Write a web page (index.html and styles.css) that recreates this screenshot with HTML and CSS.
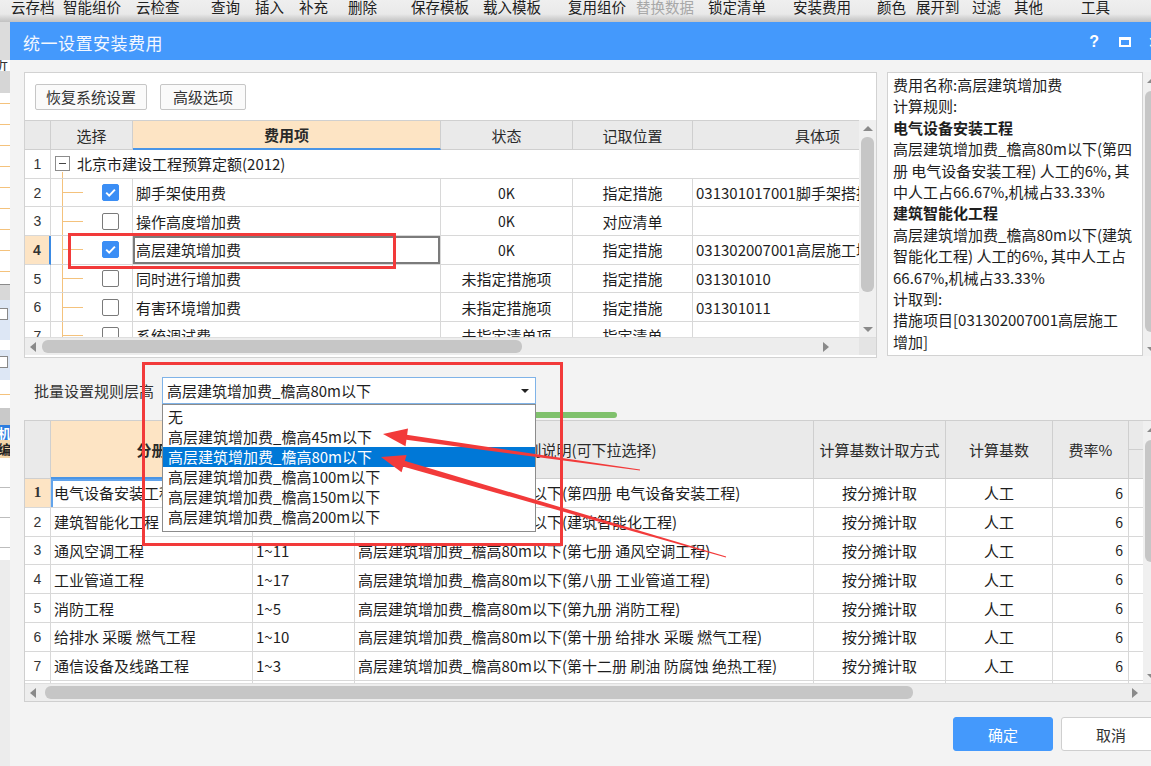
FILE: index.html
```html
<!DOCTYPE html>
<html lang="zh-CN">
<head>
<meta charset="utf-8">
<title>统一设置安装费用</title>
<link rel="stylesheet" href="styles.css">
</head>
<body>
<div class="appbar">
  <span>云存档</span><span>智能组价</span><span>云检查</span><span>查询</span><span>插入</span><span>补充</span><span>删除</span><span>保存模板</span><span>载入模板</span><span>复用组价</span><span class="dis">替换数据</span><span>锁定清单</span><span>安装费用</span><span>颜色</span><span>展开到</span><span>过滤</span><span>其他</span><span>工具</span>
</div>
<div class="main">
  <div class="strip">
    <div class="s1"></div>
    <div class="s2"><span>析</span></div>
    <div class="s3"></div>
    <div class="s4"></div>
    <div class="s5"></div>
    <div class="s6"></div>
    <div class="s7"><span class="sbox"></span></div>
    <div class="s8"></div>
    <div class="s9"><span class="sbox"></span></div>
    <div class="s10"></div>
    <div class="s11"></div>
    <div class="s12">机</div>
    <div class="s13">编</div>
    <div class="s14"></div>
    <div class="s15"></div>
  </div>
  <div class="dialog">
    <div class="titlebar">
      <span class="title">统一设置安装费用</span>
      <span class="ticons"><span class="q">?</span><span class="maxi"></span><span class="close">×</span></span>
    </div>
    <div class="dbody">
      <div class="toprow">
        <div class="leftbox">
          <div class="btnrow"><button class="btn b1">恢复系统设置</button><button class="btn b2">高级选项</button></div>
          <div class="tbl">
            <div class="tgrid">
              <div class="c h"></div>
              <div class="c h">选择</div>
              <div class="c h hot">费用项</div>
              <div class="c h">状态</div>
              <div class="c h">记取位置</div>
              <div class="c h">具体项</div>

              <div class="c rn">1</div>
              <div class="c grp"><span class="minus"></span>北京市建设工程预算定额(2012)</div>

              <div class="c rn">2</div>
              <div class="c sel"><span class="cb on"><svg viewBox="0 0 17 17" width="17" height="17"><path d="M4.2 8.6l3 3L12.9 5.6" fill="none" stroke="#fff" stroke-width="2"/></svg></span></div>
              <div class="c name">脚手架使用费</div>
              <div class="c ctr ok">0K</div>
              <div class="c ctr">指定措施</div>
              <div class="c lft">031301017001脚手架搭拆费</div>

              <div class="c rn">3</div>
              <div class="c sel"><span class="cb"></span></div>
              <div class="c name">操作高度增加费</div>
              <div class="c ctr ok">0K</div>
              <div class="c ctr">对应清单</div>
              <div class="c lft"></div>

              <div class="c rn cur">4</div>
              <div class="c sel"><span class="cb on"><svg viewBox="0 0 17 17" width="17" height="17"><path d="M4.2 8.6l3 3L12.9 5.6" fill="none" stroke="#fff" stroke-width="2"/></svg></span></div>
              <div class="c name focus">高层建筑增加费</div>
              <div class="c ctr ok">0K</div>
              <div class="c ctr">指定措施</div>
              <div class="c lft">031302007001高层施工增加</div>

              <div class="c rn">5</div>
              <div class="c sel"><span class="cb"></span></div>
              <div class="c name">同时进行增加费</div>
              <div class="c ctr">未指定措施项</div>
              <div class="c ctr">指定措施</div>
              <div class="c lft">031301010</div>

              <div class="c rn">6</div>
              <div class="c sel"><span class="cb"></span></div>
              <div class="c name">有害环境增加费</div>
              <div class="c ctr">未指定措施项</div>
              <div class="c ctr">指定措施</div>
              <div class="c lft">031301011</div>

              <div class="c rn">7</div>
              <div class="c sel"><span class="cb"></span></div>
              <div class="c name">系统调试费</div>
              <div class="c ctr">未指定清单项</div>
              <div class="c ctr">指定清单</div>
              <div class="c lft"></div>
            </div>
            <div class="vscroll"><span class="tri up"></span><span class="vthumb"></span><span class="tri down"></span></div>
          </div>
          <div class="hscroll"><span class="tri left"></span><span class="hthumb"></span><span class="tri right"></span><span class="corner"></span></div>
        </div>
        <div class="infobox">
          <div>费用名称:高层建筑增加费</div>
          <div>计算规则:</div>
          <div class="b">电气设备安装工程</div>
          <div>高层建筑增加费_檐高80m以下(第四</div>
          <div>册 电气设备安装工程) 人工的6%, 其</div>
          <div>中人工占66.67%,机械占33.33%</div>
          <div class="b">建筑智能化工程</div>
          <div>高层建筑增加费_檐高80m以下(建筑</div>
          <div>智能化工程) 人工的6%, 其中人工占</div>
          <div>66.67%,机械占33.33%</div>
          <div>计取到:</div>
          <div>措施项目[031302007001高层施工</div>
          <div>增加]</div>
        </div>
        <div class="infoscroll"><span class="tri up"></span><span class="ithumb"></span><span class="tri down"></span></div>
      </div>

      <div class="batchrow">
        <span class="blabel">批量设置规则层高</span>
        <div class="combo">
          <span class="ctext">高层建筑增加费_檐高80m以下</span>
          <span class="carrow"></span>
          <div class="ddlist">
            <div class="opt">无</div>
            <div class="opt">高层建筑增加费_檐高45m以下</div>
            <div class="opt act">高层建筑增加费_檐高80m以下</div>
            <div class="opt">高层建筑增加费_檐高100m以下</div>
            <div class="opt">高层建筑增加费_檐高150m以下</div>
            <div class="opt">高层建筑增加费_檐高200m以下</div>
          </div>
        </div>
      </div>
      <div class="greenrow"><span class="gbar"></span></div>

      <div class="bottombox">
        <div class="btbl">
          <div class="bgrid">
            <div class="c h"></div>
            <div class="c h hot">分册</div>
            <div class="c h">章节范围</div>
            <div class="c h">规则说明(可下拉选择)</div>
            <div class="c h">计算基数计取方式</div>
            <div class="c h">计算基数</div>
            <div class="c h">费率%</div>
            <div class="c h split"></div>

            <div class="c rn cur2">1</div>
            <div class="c lft bsel">电气设备安装工程</div>
            <div class="c lft">1~14</div>
            <div class="c lft">高层建筑增加费_檐高80m以下(第四册 电气设备安装工程)</div>
            <div class="c ctr">按分摊计取</div>
            <div class="c ctr">人工</div>
            <div class="c rt">6</div>
            <div class="c"></div>

            <div class="c rn">2</div>
            <div class="c lft">建筑智能化工程</div>
            <div class="c lft">1~9</div>
            <div class="c lft">高层建筑增加费_檐高80m以下(建筑智能化工程)</div>
            <div class="c ctr">按分摊计取</div>
            <div class="c ctr">人工</div>
            <div class="c rt">6</div>
            <div class="c"></div>

            <div class="c rn">3</div>
            <div class="c lft">通风空调工程</div>
            <div class="c lft">1~11</div>
            <div class="c lft">高层建筑增加费_檐高80m以下(第七册 通风空调工程)</div>
            <div class="c ctr">按分摊计取</div>
            <div class="c ctr">人工</div>
            <div class="c rt">6</div>
            <div class="c"></div>

            <div class="c rn">4</div>
            <div class="c lft">工业管道工程</div>
            <div class="c lft">1~17</div>
            <div class="c lft">高层建筑增加费_檐高80m以下(第八册 工业管道工程)</div>
            <div class="c ctr">按分摊计取</div>
            <div class="c ctr">人工</div>
            <div class="c rt">6</div>
            <div class="c"></div>

            <div class="c rn">5</div>
            <div class="c lft">消防工程</div>
            <div class="c lft">1~5</div>
            <div class="c lft">高层建筑增加费_檐高80m以下(第九册 消防工程)</div>
            <div class="c ctr">按分摊计取</div>
            <div class="c ctr">人工</div>
            <div class="c rt">6</div>
            <div class="c"></div>

            <div class="c rn">6</div>
            <div class="c lft">给排水 采暖 燃气工程</div>
            <div class="c lft">1~10</div>
            <div class="c lft">高层建筑增加费_檐高80m以下(第十册 给排水 采暖 燃气工程)</div>
            <div class="c ctr">按分摊计取</div>
            <div class="c ctr">人工</div>
            <div class="c rt">6</div>
            <div class="c"></div>

            <div class="c rn">7</div>
            <div class="c lft">通信设备及线路工程</div>
            <div class="c lft">1~3</div>
            <div class="c lft">高层建筑增加费_檐高80m以下(第十二册 刷油 防腐蚀 绝热工程)</div>
            <div class="c ctr">按分摊计取</div>
            <div class="c ctr">人工</div>
            <div class="c rt">6</div>
            <div class="c"></div>

            <div class="c rn"></div><div class="c"></div><div class="c"></div><div class="c"></div><div class="c"></div><div class="c"></div><div class="c"></div><div class="c"></div>
          </div>
          <div class="bvscroll"><span class="tri up"></span><span class="bvthumb"></span><span class="tri down"></span></div>
        </div>
        <div class="hscroll bh"><span class="tri left"></span><span class="hthumb bthumb"></span><span class="tri right"></span></div>
      </div>

      <div class="footer">
        <button class="fbtn ok2">确定</button>
        <button class="fbtn cancel">取消</button>
      </div>
    </div>
  </div>
</div>

<div class="annot">
  <div class="redbox r1"></div>
  <div class="redbox r2"></div>
  <svg class="arrows" width="1151" height="766" viewBox="0 0 1151 766">
    <polygon points="403.15,434.3 640.07,469.5 639.93,470.5 402.45,439.3" fill="#f23a3a"/>
    <polygon points="383,434 405.5,446.2 408,428.4" fill="#f23a3a"/>
    <polygon points="401.04,459.72 726.14,556.52 725.86,557.48 399.37,465.48" fill="#f23a3a"/>
    <polygon points="381,457 401.55,472.32 406.56,455.04" fill="#f23a3a"/>
  </svg>
</div>
</body>
</html>
```

FILE: styles.css
```css
* { box-sizing: border-box; margin: 0; padding: 0; }
html, body { width: 1151px; height: 766px; overflow: hidden; }
body {
  font-family: "Noto Sans CJK SC", "Noto Sans", sans-serif;
  font-size: 15px;
  color: #1e1e1e;
  background: #f0f0f0;
  display: flex;
  flex-direction: column;
  position: relative;
}

/* background app toolbar */
.appbar {
  height: 22px;
  flex: none;
  display: flex;
  align-items: flex-start;
  white-space: nowrap;
  font-size: 14.5px;
  line-height: 15px;
  color: #202020;
  background: linear-gradient(#efefef 0, #e9e9e9 14px, #d4d4d4 18px, #c2c2c2 22px);
}
.appbar span { flex: none; margin-top: -1px; }
.appbar span.dis { color: #a8a8a8; }
.appbar span:nth-child(1) { margin-left: 11px; }
.appbar span:nth-child(2) { margin-left: 8.5px; }
.appbar span:nth-child(3) { margin-left: 15px; }
.appbar span:nth-child(4) { margin-left: 31.5px; }
.appbar span:nth-child(5) { margin-left: 15px; }
.appbar span:nth-child(6) { margin-left: 15px; }
.appbar span:nth-child(7) { margin-left: 20px; }
.appbar span:nth-child(8) { margin-left: 34px; }
.appbar span:nth-child(9) { margin-left: 14px; }
.appbar span:nth-child(10) { margin-left: 27px; }
.appbar span:nth-child(11) { margin-left: 10px; }
.appbar span:nth-child(12) { margin-left: 14px; }
.appbar span:nth-child(13) { margin-left: 27px; }
.appbar span:nth-child(14) { margin-left: 26px; }
.appbar span:nth-child(15) { margin-left: 10px; }
.appbar span:nth-child(16) { margin-left: 12.5px; }
.appbar span:nth-child(17) { margin-left: 13px; }
.appbar span:nth-child(18) { margin-left: 38px; }

.main { display: flex; flex: 1; min-height: 0; }

/* left strip of the app behind the dialog */
.strip { width: 10px; flex: none; display: flex; flex-direction: column; overflow: hidden; background: #ececec; }
.strip > div { flex: none; }
.s1 { height: 38px; background: #dcdcdc; }
.s2 { height: 11px; background: #fff; font-size: 15px; line-height: 11px; overflow: hidden; }
.s2 span { display: block; margin-left: -7px; margin-top: -3px; color: #333; }
.s3 { height: 22px; background: #d6d6d6; }
.s4 { height: 190px; background: #fff repeating-linear-gradient(to bottom, transparent 0 10px, #f4c27c 10px 11px, transparent 11px 21px); }
.s5 { height: 4px; background: linear-gradient(#fff 0 1px, #8a8a8a 1px 2px, #d8d8d8 2px); }
.s6 { height: 13px; background: #d8d8d8; }
.s7 { height: 40px; background: #dde7f5; padding-top: 8px; }
.s8 { height: 10px; background: #fff; }
.s9 { height: 30px; background: #dde7f5; padding-top: 6px; }
.sbox { display: block; width: 12px; height: 12px; margin-left: -4px; border: 1px solid #888; background: #fff; }
.s10 { height: 28px; background: #fff linear-gradient(#f4c27c, #f4c27c) 0 14px / 100% 1px no-repeat; }
.s11 { height: 17px; background: #c9c9c9; }
.s12 { height: 15px; background: #2d7ddf; color: #fff; font-size: 13px; line-height: 15px; font-weight: bold; text-indent: -2px; overflow: hidden; }
.s13 { height: 18px; background: #f4d6ab; color: #222; font-size: 13px; line-height: 18px; font-weight: bold; text-indent: -2px; overflow: hidden; }
.s14 { height: 102px; background: #fff repeating-linear-gradient(to bottom, transparent 0 29px, #bdbdbd 29px 30px); }
.s15 { flex: 1; background: #ededed; }

/* dialog */
.dialog { width: 1165px; flex: none; display: flex; flex-direction: column; background: #f3f3f3; overflow: hidden; }
.titlebar {
  height: 38px; flex: none;
  background: #4499fc;
  color: #fff;
  display: flex; align-items: center;
  padding: 2px 0 0 13px;
}
.title { font-size: 17px; color: #f4f8ff; letter-spacing: 0.5px; }
.ticons { margin-left: auto; display: flex; align-items: center; padding-right: 15px; }
.q { font-family: "Liberation Sans", sans-serif; font-weight: bold; font-size: 16px; width: 8px; }
.maxi { width: 12px; height: 10px; border: 2px solid #fff; border-top-width: 3px; margin-left: 22px; }
.close { font-family: "Liberation Sans", sans-serif; font-size: 20px; margin-left: 17px; }

.dbody { padding: 12px 14px 0; display: flex; flex-direction: column; }
.toprow { display: flex; height: 286px; flex: none; }
.leftbox { width: 853px; border: 1px solid #d2d2d2; background: #fff; display: flex; flex-direction: column; }
.btnrow { display: flex; gap: 13px; padding: 11px 0 0 10px; }
.btn {
  height: 26px; border: 1px solid #c6c6c6; border-radius: 2px; background: #fafafa;
  font-family: inherit; font-size: 15px; color: #333; line-height: 24px;
}
.b1 { width: 112px; }
.b2 { width: 86px; }

.tbl { display: flex; margin-top: 10px; height: 217px; }
.tgrid {
  width: 834px; flex: none; overflow: hidden;
  display: grid;
  grid-template-columns: 26px 82px 308px 132px 120px 250px;
  grid-template-rows: 29px;
  grid-auto-rows: 28.7px;
  border-top: 1px solid #d0d0d0;
}
.c {
  border-right: 1px solid #d8d8d8;
  border-bottom: 1px solid #d8d8d8;
  display: flex; align-items: center;
  white-space: nowrap; overflow: hidden;
  font-size: 15px; color: #1e1e1e;
  min-width: 0;
}
.h { background: #eaeaea; justify-content: center; border-color: #cfcfcf; color: #2a2a2a; }
.h.hot { background: #fde4c4; font-weight: bold; border-bottom: 2px solid #4a95e6; }
.rn { justify-content: center; font-size: 14px; font-family: "Liberation Sans", sans-serif; color: #333; }
.rn.cur { background: #fde4c4; font-weight: bold; border-right: 2px solid #3a8ae4; }
.rn.cur2 { background: #fde4c4; font-weight: bold; font-family: "Liberation Serif", serif; font-size: 15px; }
.grp {
  grid-column: span 5; border-right: none; padding-left: 4px;
  background: linear-gradient(#f4c27c, #f4c27c) 11px 22px / 1px 100% no-repeat;
}
.minus {
  width: 15px; height: 15px; border: 1px solid #8c8c8c; background: #fff linear-gradient(#444, #444) center / 7px 1px no-repeat;
  margin-right: 7px; flex: none;
}
.sel {
  padding-left: 51px;
  background:
    linear-gradient(#f4c27c, #f4c27c) 11px 0 / 1px 100% no-repeat,
    linear-gradient(#f4c27c, #f4c27c) 11px 50% / 21px 1px no-repeat;
}
.cb { width: 17px; height: 17px; border: 1px solid #7a7a7a; border-radius: 2px; background: #fff; flex: none; display: block; }
.cb.on { background: #3b8ef5; border-color: #3b8ef5; }
.cb svg { display: block; margin: -1px; }
.name { padding-left: 3px; }
.name.focus { box-shadow: inset 0 0 0 2px #7b7b7b; }
.ctr { justify-content: center; }
.ok { font-size: 14px; }
.lft { padding-left: 3px; }
.rt { justify-content: flex-end; padding-right: 5px; font-size: 14px; }

.vscroll { width: 17px; flex: none; background: #f0f0f0; display: flex; flex-direction: column; align-items: center; padding: 6px 0 5px; }
.vthumb { width: 13px; height: 155px; background: #c6c6c6; border-radius: 6px; margin: 6px 0 auto; }
.tri { width: 0; height: 0; display: block; flex: none; }
.tri.up { border-left: 5px solid transparent; border-right: 5px solid transparent; border-bottom: 5px solid #8a8a8a; }
.tri.down { border-left: 5px solid transparent; border-right: 5px solid transparent; border-top: 5px solid #8a8a8a; }
.tri.left { border-top: 5px solid transparent; border-bottom: 5px solid transparent; border-right: 6px solid #8a8a8a; }
.tri.right { border-top: 5px solid transparent; border-bottom: 5px solid transparent; border-left: 6px solid #8a8a8a; }

.hscroll { height: 18px; flex: none; background: #ededed; display: flex; align-items: center; padding-left: 5px; border-top: 1px solid #dedede; }
.hthumb { width: 480px; height: 13px; background: #c6c6c6; border-radius: 6px; margin-left: 6px; }
.hscroll .tri.right { margin-left: auto; margin-right: 30px; }
.hscroll .corner { width: 17px; align-self: stretch; background: #e4e4e4; }
.leftbox .hscroll { margin-bottom: 2px; }

.infobox {
  width: 256px; margin-left: 10px; height: 284px; flex: none;
  background: #fff; border: 1px solid #d2d2d2;
  padding: 1px 0 0 5px;
  font-size: 15px; line-height: 21.4px; color: #1e1e1e;
  white-space: nowrap; overflow: hidden;
}
.infobox .b { font-weight: bold; }
.infoscroll { width: 17px; height: 284px; flex: none; background: #f0f0f0; display: flex; flex-direction: column; align-items: center; padding: 6px 0 4px; }
.ithumb { width: 13px; height: 241px; background: #c6c6c6; border-radius: 6px; margin: 8px 0 auto; }

/* batch rule combo */
.batchrow { display: flex; align-items: center; height: 27px; margin-top: 19px; padding-left: 10px; flex: none; }
.blabel { font-size: 15px; color: #333; width: 120px; }
.combo {
  position: relative;
  margin-left: 8px; width: 374px; height: 27px;
  border: 1px solid #7fb3e8; background: #fff;
  display: flex; align-items: center; padding-left: 4px;
}
.ctext { font-size: 15px; color: #1e1e1e; }
.carrow { margin-left: auto; margin-right: 6px; width: 0; height: 0; border-left: 4px solid transparent; border-right: 4px solid transparent; border-top: 4px solid #222; }
.ddlist {
  position: absolute; left: -1px; top: 26px; width: 374px; height: 128px;
  background: #fff; border: 1px solid #8c8c8c; padding-top: 2px; z-index: 5;
}
.opt { height: 20px; line-height: 20px; padding-left: 5px; font-size: 15px; color: #1e1e1e; white-space: nowrap; }
.opt.act { background: #0078d7; color: #fff; }

.greenrow { height: 6px; margin-top: 8px; flex: none; display: flex; }
.gbar { width: 117px; margin-left: 476px; background: #7fc16c; border-radius: 3px; }

/* bottom table */
.bottombox { margin-top: 2px; height: 282px; flex: none; border: 1px solid #cfcfcf; background: #fff; display: flex; flex-direction: column; }
.btbl { display: flex; height: 262px; flex: none; }
.bgrid {
  width: 1118px; flex: none; overflow: hidden;
  display: grid;
  grid-template-columns: 26px 202px 102px 459px 132px 107px 76px 60px;
  grid-template-rows: 58px;
  grid-auto-rows: 28.8px;
}
.bsel { box-shadow: inset 2px 2px 0 0 #62a4ec; }
.split { background: #eaeaea linear-gradient(#cfcfcf, #cfcfcf) 0 28px / 100% 1px no-repeat; }
.bvscroll { width: 17px; flex: none; background: #f0f0f0; display: flex; flex-direction: column; align-items: center; padding: 6px 0 4px; }
.bvthumb { width: 13px; height: 122px; background: #c6c6c6; border-radius: 6px; margin: 8px 0 auto; }
.bh { border-top: 1px solid #dedede; }
.bthumb { width: 868px; margin-left: 9px; }
.bh .tri.right { margin-right: 22px; }

.footer { display: flex; justify-content: flex-end; gap: 8px; margin-top: 15px; }
.fbtn { width: 100px; height: 34px; border-radius: 3px; font-family: inherit; font-size: 15px; }
.ok2 { background: #4499fc; border: 1px solid #4499fc; color: #fff; }
.cancel { background: #fff; border: 1px solid #cfcfcf; color: #333; }

/* annotations */
.annot { position: absolute; left: 0; top: 0; width: 1151px; height: 766px; pointer-events: none; z-index: 10; }
.redbox { position: absolute; border: 3px solid #f23a3a; }
.r1 { left: 68px; top: 233px; width: 328px; height: 36px; }
.r2 { left: 142px; top: 362px; width: 421px; height: 184px; }
.arrows { position: absolute; left: 0; top: 0; }
```
